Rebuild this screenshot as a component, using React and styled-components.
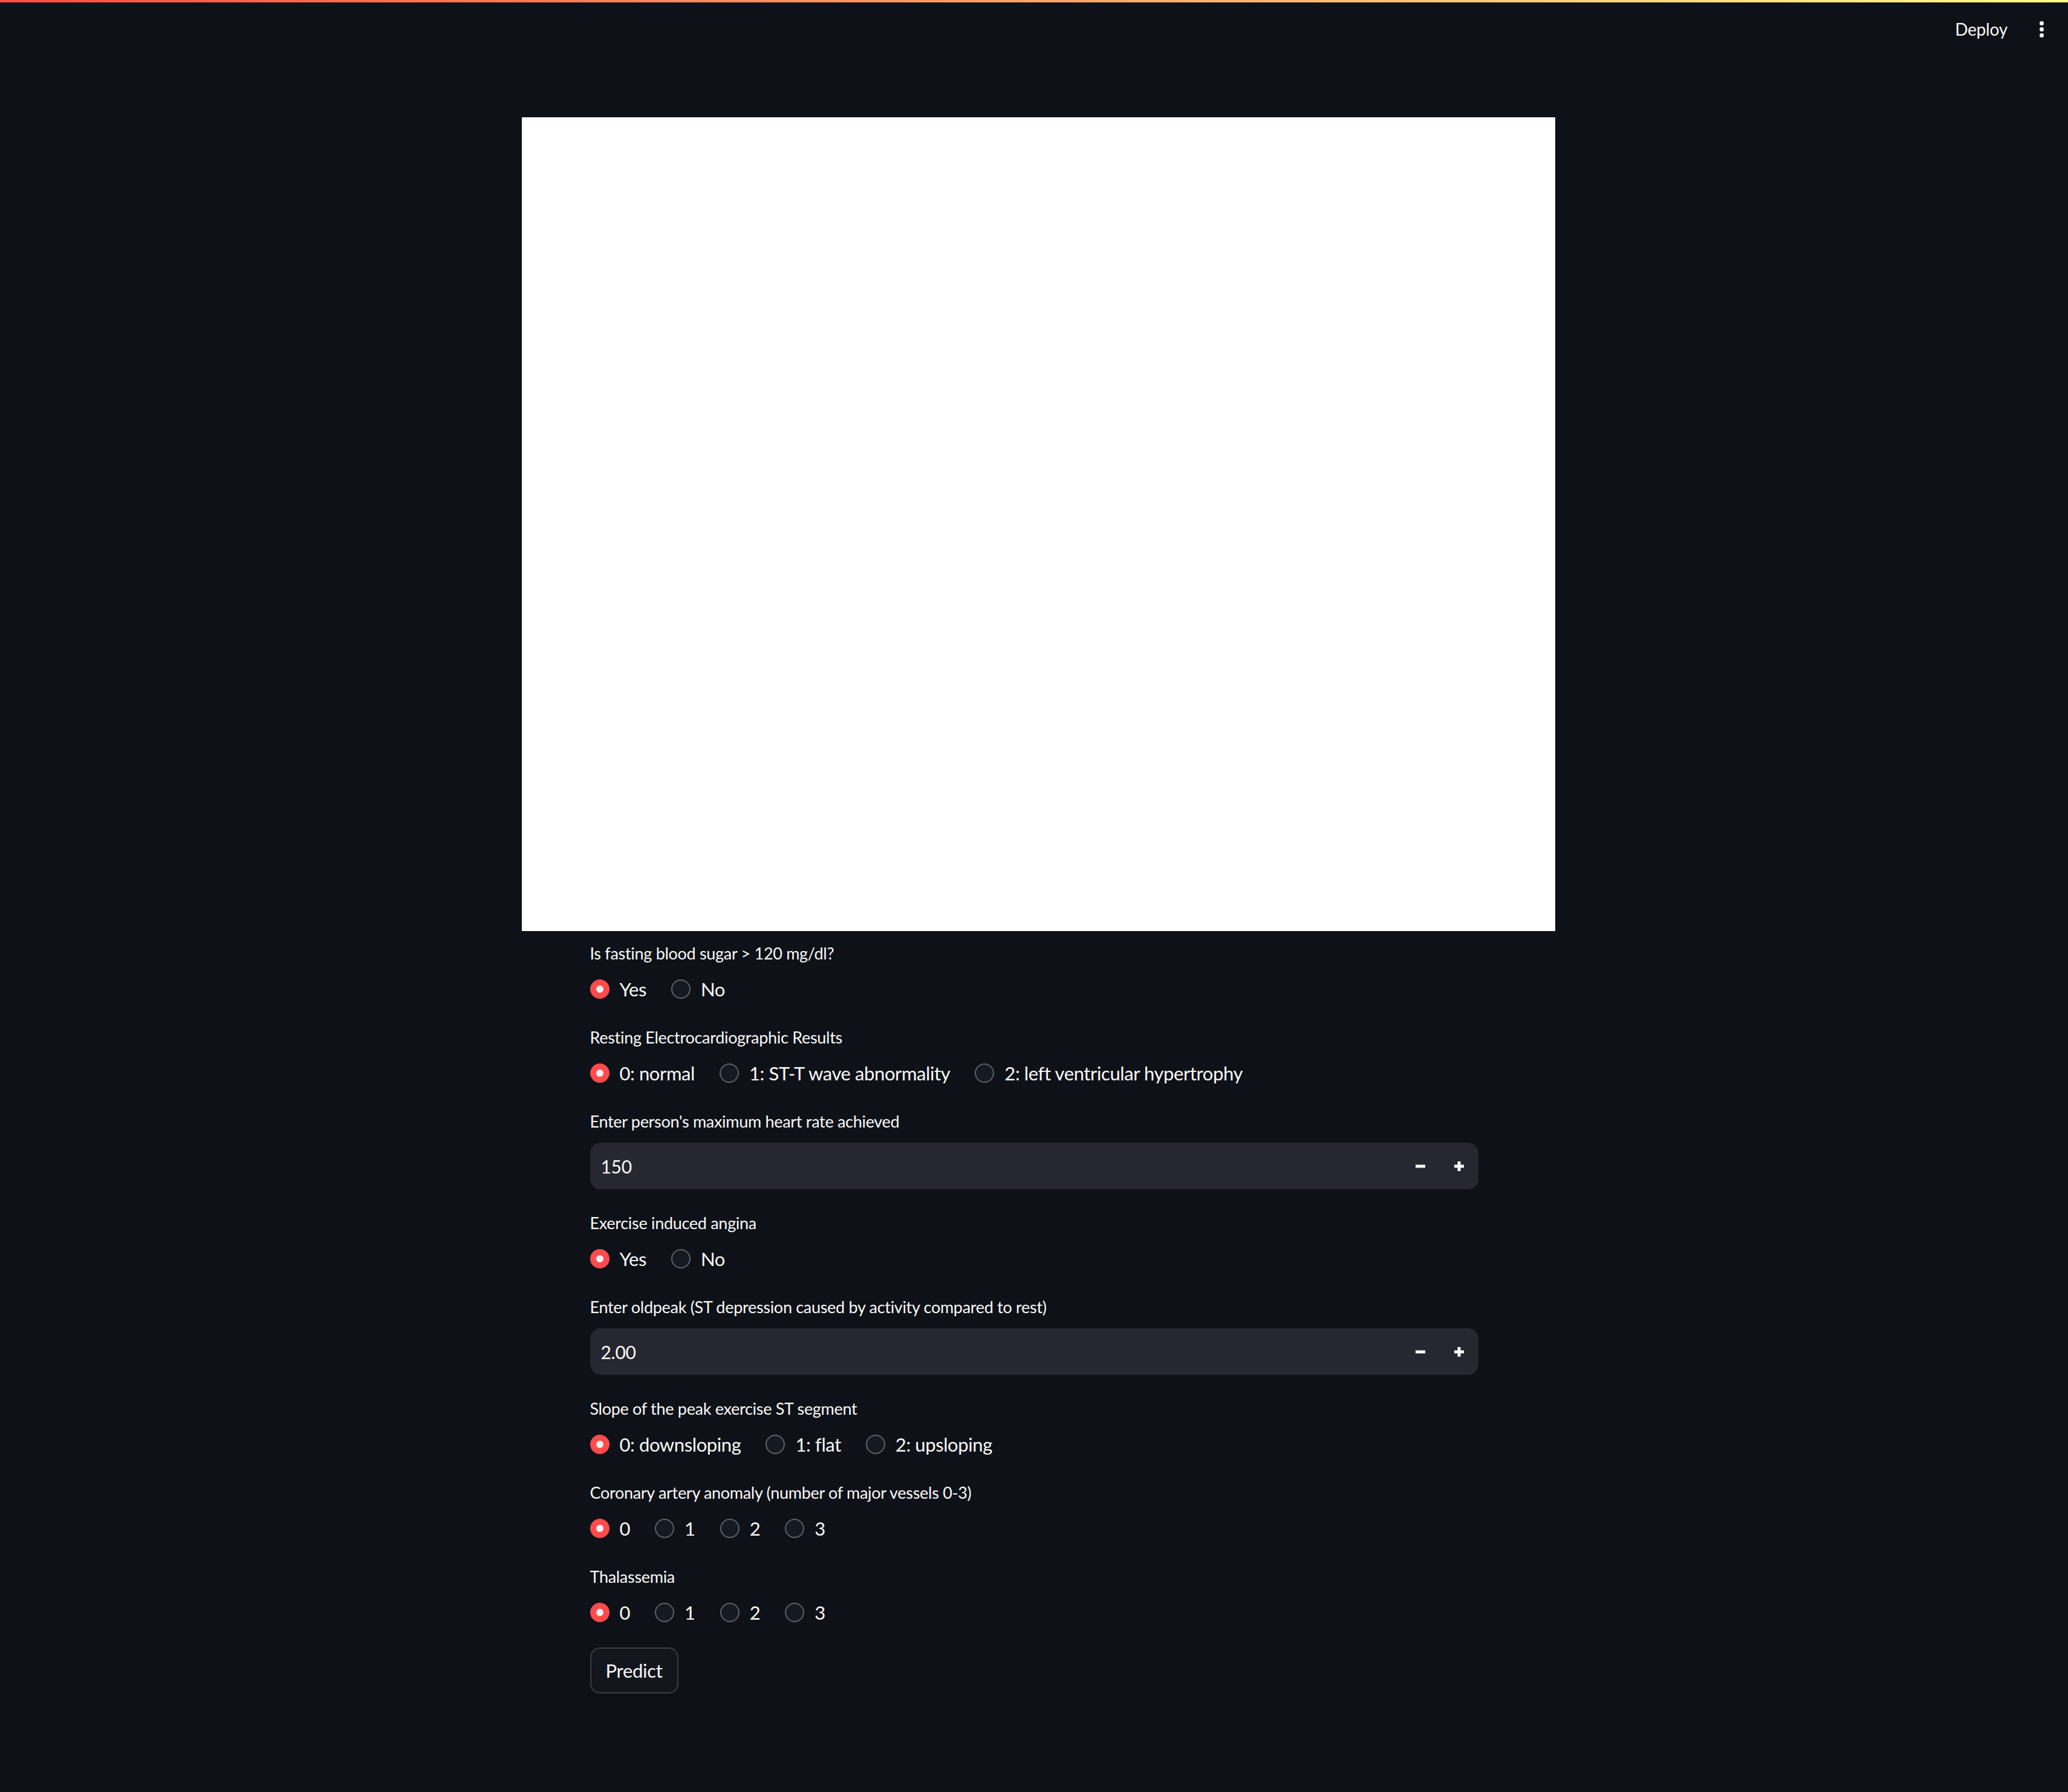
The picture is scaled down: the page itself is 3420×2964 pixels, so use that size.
import React from "react";
import styled, { createGlobalStyle } from "styled-components";

const GlobalStyle = createGlobalStyle`
  body {
    margin: 0;
    background: #0e1117;
    color: #fafafa;
    font-family: "Source Sans Pro", Lato, "Noto Sans", sans-serif;
  }
`;

const Page = styled.div`
  min-height: 2964px;
  background: #0e1117;
`;

const Decoration = styled.div`
  height: 4px;
  background: linear-gradient(90deg, #ff4b4b, #fffd80);
`;

const Header = styled.div`
  height: 88px;
  display: flex;
  align-items: center;
  justify-content: flex-end;
  padding-right: 30px;
`;

const DeployButton = styled.span`
  font-size: 28px;
  letter-spacing: -0.2px;
  color: #fafafa;
  margin-right: 42px;
  cursor: pointer;
`;

const Kebab = styled.div`
  display: flex;
  flex-direction: column;
  gap: 3px;
  width: 28px;
  align-items: center;
`;

const Dot = styled.span`
  width: 7px;
  height: 7px;
  border-radius: 50%;
  background: #fafafa;
`;

const Main = styled.div`
  width: 1469px;
  margin: 0 auto;
  padding-top: 102px;
  display: flex;
  flex-direction: column;
  gap: 34px;
`;

const Plot = styled.div`
  width: 1709px;
  height: 1346px;
  margin-left: -113px;
  margin-bottom: -19px;
  background: #ffffff;
`;

const Field = styled.div`
  display: flex;
  flex-direction: column;
  gap: 13px;
`;

const Label = styled.div`
  font-size: 27px;
  letter-spacing: -0.3px;
  line-height: 44px;
  height: 44px;
`;

const RadioRow = styled.div`
  display: flex;
  align-items: center;
  height: 48px;
  gap: 41px;
`;

const Option = styled.label`
  display: flex;
  align-items: center;
  gap: 17px;
  font-size: 31px;
  letter-spacing: -0.4px;
  cursor: pointer;
`;

const Circle = styled.span`
  box-sizing: border-box;
  flex: none;
  width: 32px;
  height: 32px;
  border-radius: 50%;
  display: flex;
  align-items: center;
  justify-content: center;
  background: ${(p) => (p.checked ? "#ff4b4b" : "#151921")};
  border: ${(p) => (p.checked ? "none" : "2px solid #5f6168")};

  &::after {
    content: "";
    display: ${(p) => (p.checked ? "block" : "none")};
    width: 12px;
    height: 12px;
    border-radius: 50%;
    background: #eef0f6;
  }
`;

const NumberBox = styled.div`
  height: 77px;
  border-radius: 17px;
  background: #262730;
  display: flex;
  align-items: center;
`;

const NumberValue = styled.div`
  flex: 1;
  padding-left: 18px;
  font-size: 30px;
  letter-spacing: -0.3px;
  color: #fafafa;
`;

const StepButton = styled.div`
  width: 64px;
  height: 100%;
  display: flex;
  align-items: center;
  justify-content: center;
  cursor: pointer;
`;

const PredictButton = styled.button`
  align-self: flex-start;
  width: 146px;
  height: 76px;
  border-radius: 16px;
  border: 2px solid #3c3e46;
  background: #13161d;
  color: #fafafa;
  font-family: inherit;
  font-size: 31px;
  letter-spacing: -0.3px;
  cursor: pointer;
`;

const Minus = () => (
  <svg width="16" height="16" viewBox="0 0 16 16">
    <rect x="0" y="5.5" width="16" height="5" fill="#fafafa" />
  </svg>
);

const Plus = () => (
  <svg width="16" height="16" viewBox="0 0 16 16">
    <rect x="0" y="5.5" width="16" height="5" fill="#fafafa" />
    <rect x="5.5" y="0" width="5" height="16" fill="#fafafa" />
  </svg>
);

const fields = [
  { label: "Is fasting blood sugar > 120 mg/dl?", options: ["Yes", "No"] },
  {
    label: "Resting Electrocardiographic Results",
    options: ["0: normal", "1: ST-T wave abnormality", "2: left ventricular hypertrophy"],
  },
  { label: "Enter person's maximum heart rate achieved", value: "150" },
  { label: "Exercise induced angina", options: ["Yes", "No"] },
  { label: "Enter oldpeak (ST depression caused by activity compared to rest)", value: "2.00" },
  { label: "Slope of the peak exercise ST segment", options: ["0: downsloping", "1: flat", "2: upsloping"] },
  { label: "Coronary artery anomaly (number of major vessels 0-3)", options: ["0", "1", "2", "3"] },
  { label: "Thalassemia", options: ["0", "1", "2", "3"] },
];

const App = () => {
  return (
    <Page>
      <GlobalStyle />
      <Decoration />
      <Header>
        <DeployButton>Deploy</DeployButton>
        <Kebab>
          <Dot />
          <Dot />
          <Dot />
        </Kebab>
      </Header>
      <Main>
        <Plot />
        {fields.map((f) => (
          <Field key={f.label}>
            <Label>{f.label}</Label>
            {f.options ? (
              <RadioRow>
                {f.options.map((o, i) => (
                  <Option key={o}>
                    <Circle checked={i === 0} />
                    {o}
                  </Option>
                ))}
              </RadioRow>
            ) : (
              <NumberBox>
                <NumberValue>{f.value}</NumberValue>
                <StepButton>
                  <Minus />
                </StepButton>
                <StepButton>
                  <Plus />
                </StepButton>
              </NumberBox>
            )}
          </Field>
        ))}
        <PredictButton>Predict</PredictButton>
      </Main>
    </Page>
  );
};

export default App;
